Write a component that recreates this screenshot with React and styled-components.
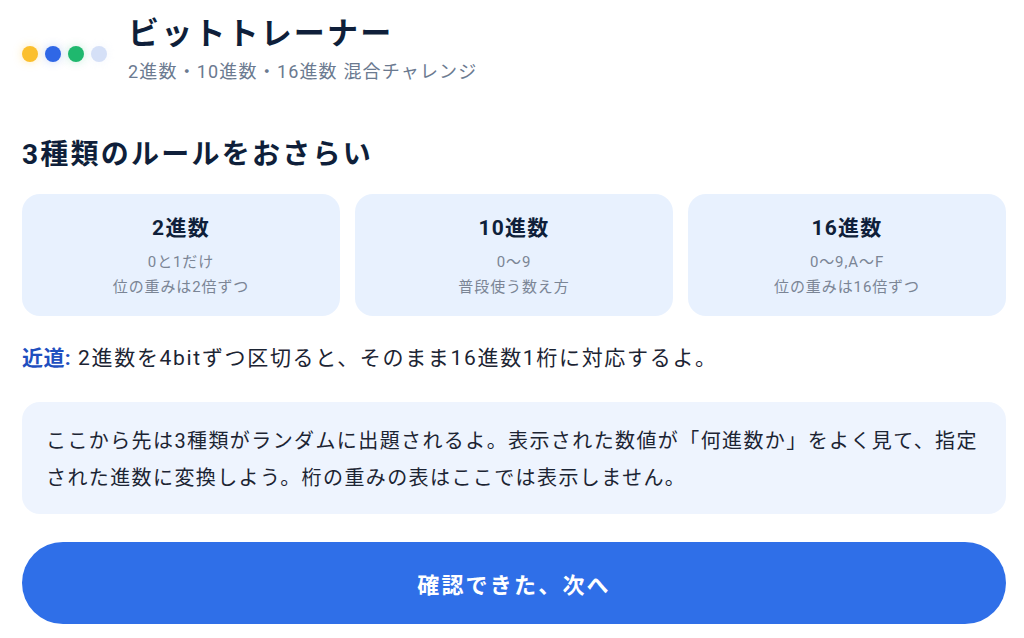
import styled, { createGlobalStyle } from "styled-components";

const GlobalStyle = createGlobalStyle`
  html, body {
    margin: 0;
    padding: 0;
    background: #ffffff;
  }
  body {
    font-family: Roboto, "Noto Sans CJK JP", "Noto Sans", sans-serif;
    color: #0f1f3a;
  }
`;

const Page = styled.main`
  width: 1024px;
  box-sizing: border-box;
  padding: 12px 18px 0 22px;
  display: flex;
  flex-direction: column;
`;

const Header = styled.header`
  display: flex;
  align-items: center;
  gap: 21px;
`;

const Dots = styled.div`
  display: flex;
  gap: 7px;
  margin-top: 10px;
`;

const Dot = styled.span`
  width: 16px;
  height: 16px;
  border-radius: 50%;
  background: ${(p) => p.$color};
  box-shadow: 0 0 10px ${(p) => p.$glow};
`;

const TitleBlock = styled.div`
  display: flex;
  flex-direction: column;
`;

const Title = styled.h1`
  margin: 0;
  font-size: 31px;
  font-weight: 700;
  line-height: 44px;
  letter-spacing: 0.07em;
`;

const Subtitle = styled.p`
  margin: 2px 0 0;
  font-size: 18px;
  line-height: 28px;
  color: #6b7a90;
  letter-spacing: 0.065em;
`;

const SectionTitle = styled.h2`
  margin: 49px 0 0;
  font-size: 28px;
  font-weight: 700;
  line-height: 40px;
  letter-spacing: 0.08em;
`;

const CardRow = styled.div`
  display: grid;
  grid-template-columns: repeat(3, 1fr);
  gap: 15px;
  margin-top: 19px;
`;

const Card = styled.div`
  background: #e8f1fe;
  border-radius: 18px;
  height: 122px;
  box-sizing: border-box;
  padding-top: 18px;
  display: flex;
  flex-direction: column;
  align-items: center;
`;

const CardTitle = styled.div`
  font-size: 21px;
  font-weight: 700;
  line-height: 32px;
  letter-spacing: 0.06em;
  margin-bottom: 6px;
`;

const CardLine = styled.div`
  font-size: 15px;
  line-height: 25px;
  color: #7b8595;
  letter-spacing: 0.06em;
`;

const Tip = styled.p`
  margin: 27px 0 0;
  font-size: 21px;
  line-height: 30px;
  color: #1c2433;
  letter-spacing: 0.08em;
`;

const TipLabel = styled.strong`
  color: #1f4fbf;
  font-weight: 700;
  letter-spacing: 0.02em;
`;

const InfoBox = styled.div`
  margin-top: 29px;
  background: #eef4fe;
  border-radius: 18px;
  height: 112px;
  box-sizing: border-box;
  padding: 21px 22px 0 24px;
  font-size: 20px;
  line-height: 37px;
  color: #1c2433;
  letter-spacing: 0.07em;
`;

const NextButton = styled.button`
  margin-top: 28px;
  height: 82px;
  border: none;
  border-radius: 41px;
  background: #2f6fe8;
  color: #ffffff;
  font-family: Roboto, "Noto Sans CJK JP", sans-serif;
  font-size: 22px;
  font-weight: 700;
  letter-spacing: 0.1em;
  cursor: pointer;
`;

const bases = [
  { title: "2進数", lines: ["0と1だけ", "位の重みは2倍ずつ"] },
  { title: "10進数", lines: ["0〜9", "普段使う数え方"] },
  { title: "16進数", lines: ["0〜9,A〜F", "位の重みは16倍ずつ"] },
];

const dots = [
  { color: "#fbbf2d", glow: "rgba(251,191,45,0.35)" },
  { color: "#2f67e6", glow: "rgba(47,103,230,0.25)" },
  { color: "#1fb86e", glow: "rgba(31,184,110,0.25)" },
  { color: "#d5e0f7", glow: "rgba(213,224,247,0.3)" },
];

export default function App() {
  return (
    <>
      <GlobalStyle />
      <Page>
        <Header>
          <Dots>
            {dots.map((d, i) => (
              <Dot key={i} $color={d.color} $glow={d.glow} />
            ))}
          </Dots>
          <TitleBlock>
            <Title>ビットトレーナー</Title>
            <Subtitle>2進数・10進数・16進数 混合チャレンジ</Subtitle>
          </TitleBlock>
        </Header>

        <SectionTitle>3種類のルールをおさらい</SectionTitle>

        <CardRow>
          {bases.map((b) => (
            <Card key={b.title}>
              <CardTitle>{b.title}</CardTitle>
              {b.lines.map((l) => (
                <CardLine key={l}>{l}</CardLine>
              ))}
            </Card>
          ))}
        </CardRow>

        <Tip>
          <TipLabel>近道:</TipLabel> 2進数を4bitずつ区切ると、そのまま16進数1桁に対応するよ。
        </Tip>

        <InfoBox>
          ここから先は3種類がランダムに出題されるよ。表示された数値が「何進数か」をよく見て、指定された進数に変換しよう。桁の重みの表はここでは表示しません。
        </InfoBox>

        <NextButton>確認できた、次へ</NextButton>
      </Page>
    </>
  );
}
